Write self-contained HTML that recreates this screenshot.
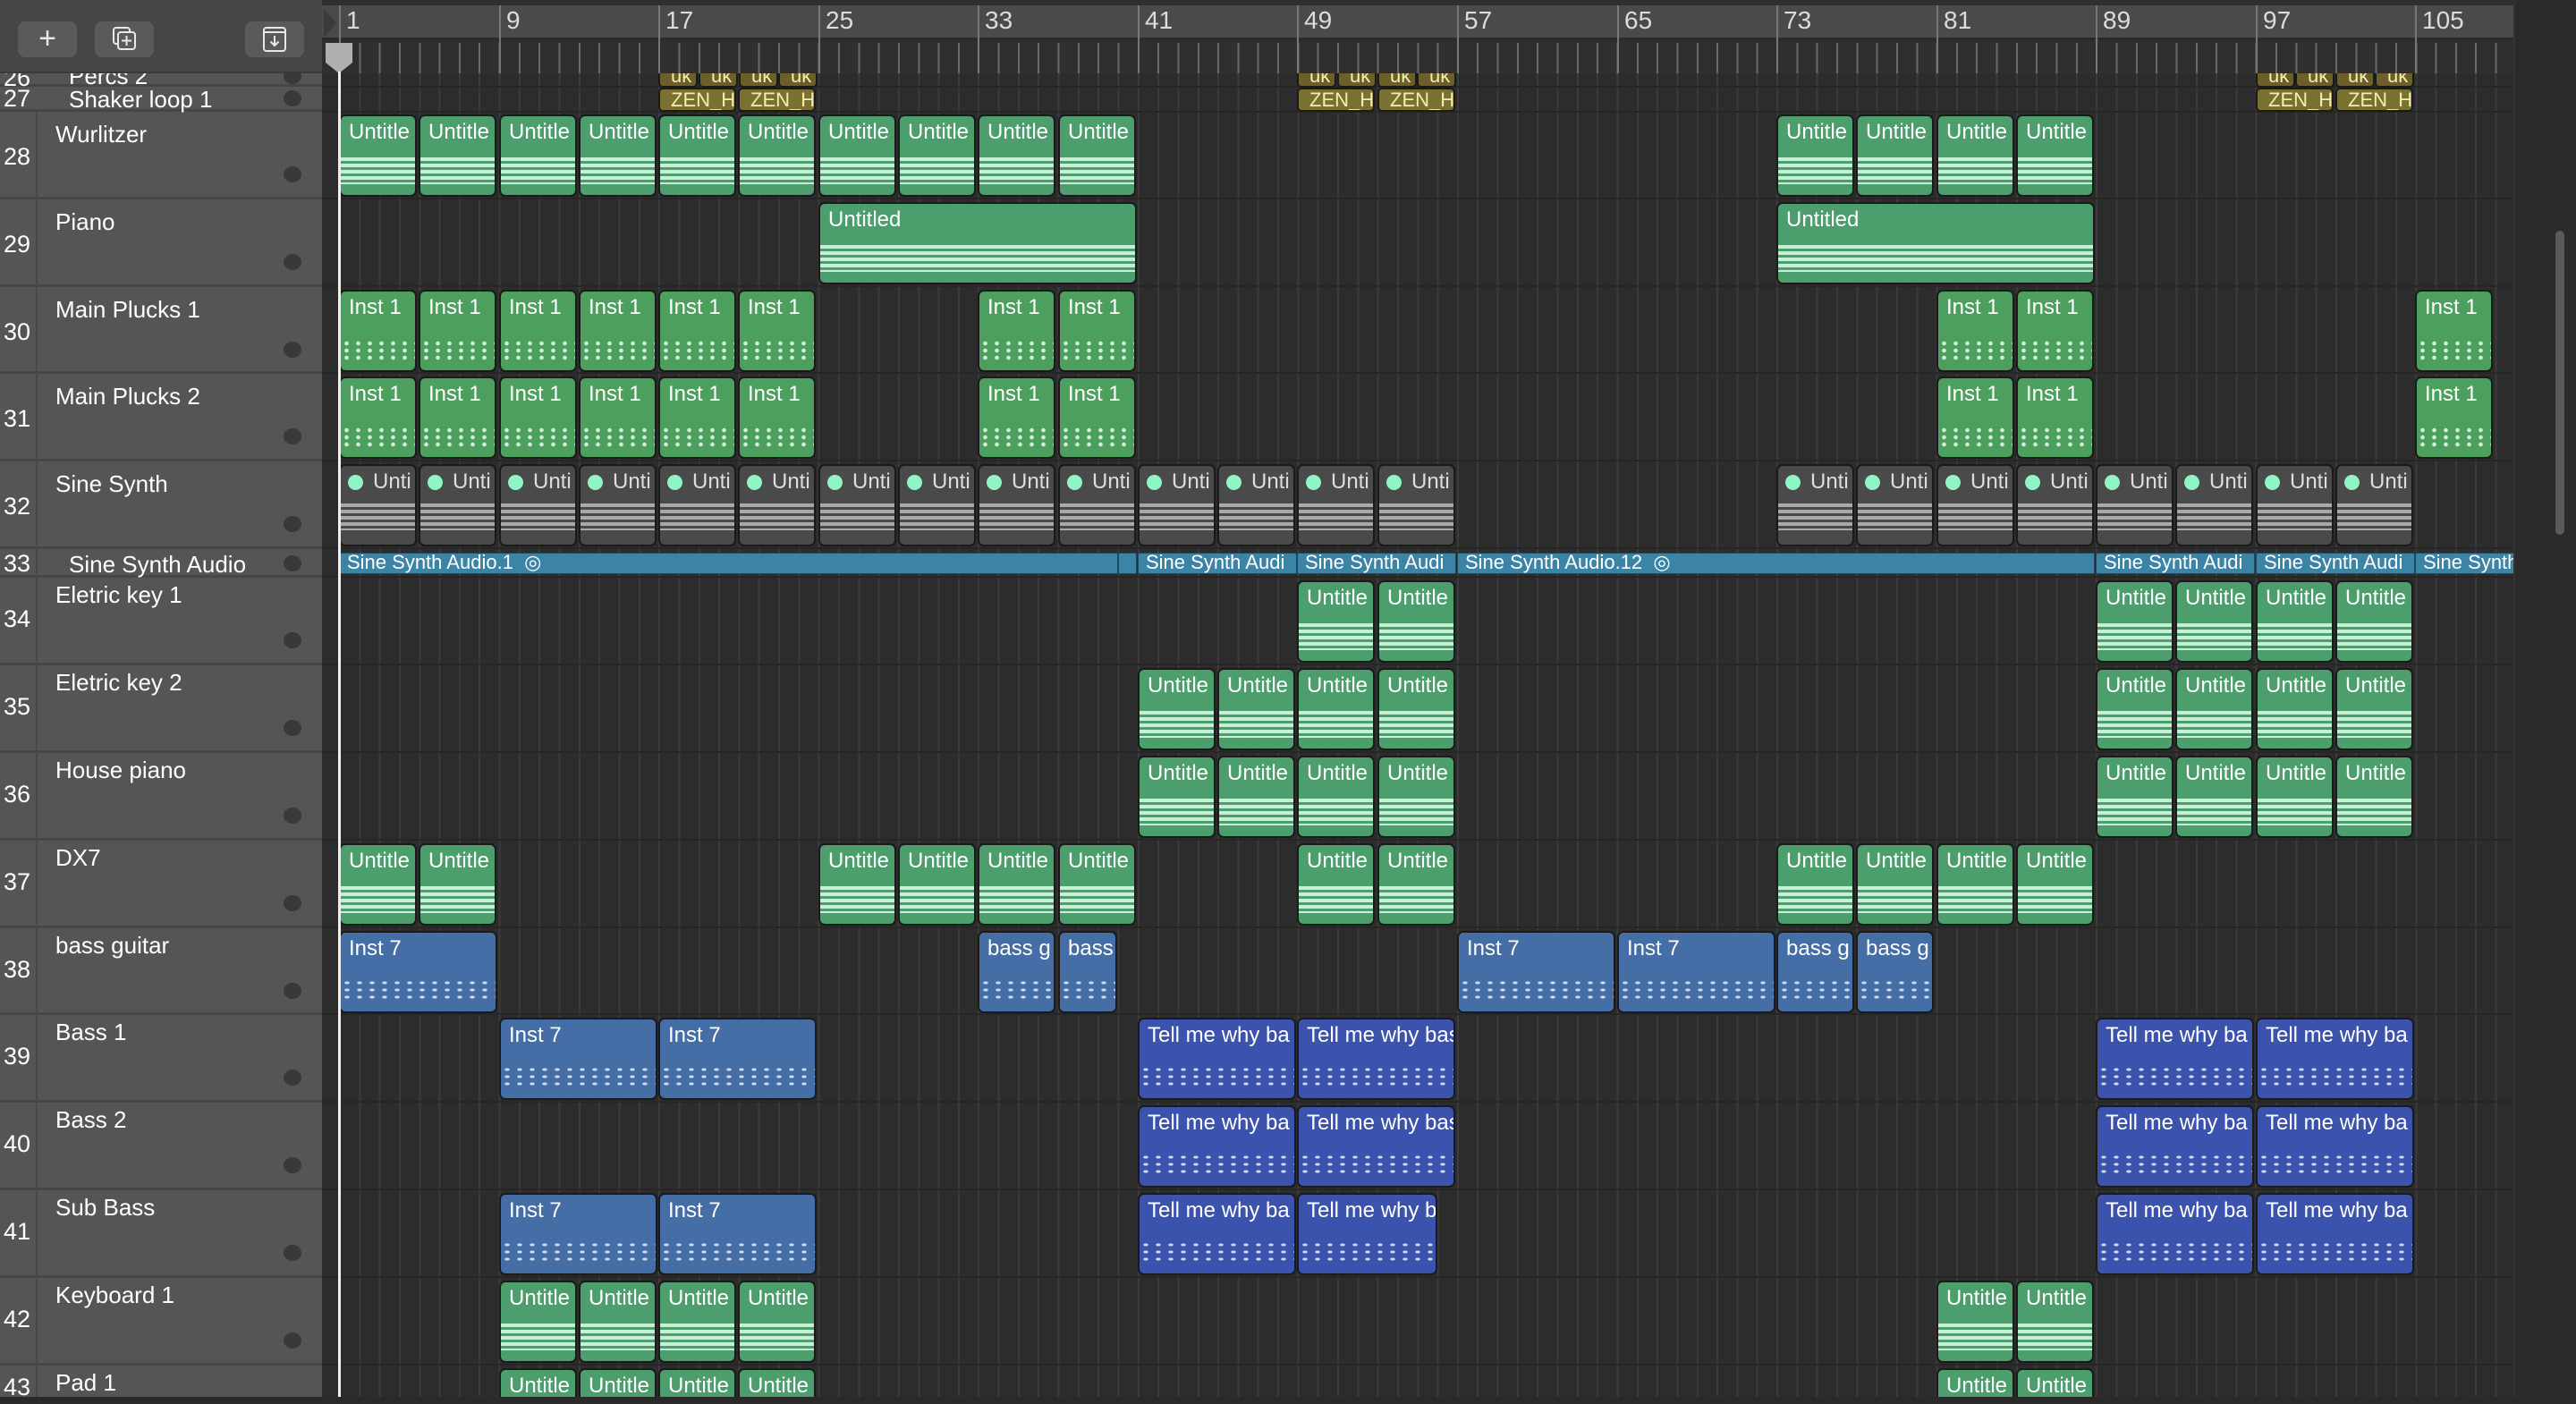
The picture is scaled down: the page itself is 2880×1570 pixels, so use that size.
<!DOCTYPE html>
<html><head><meta charset="utf-8"><style>
*{margin:0;padding:0;box-sizing:border-box}
html,body{width:2880px;height:1570px;overflow:hidden}
body{background:#2c2c2c;font-family:"Liberation Sans",sans-serif}
#wrap{position:relative;width:2880px;height:1570px;overflow:hidden}
#tl{position:absolute;left:360px;top:0;width:2450px;height:1570px;background:#2c2c2c}
#grid{position:absolute;left:379px;top:45px;width:2431px;height:1525px;background:repeating-linear-gradient(90deg,#3b3b3b 0 2px,transparent 2px 22.32px)}
#list{position:absolute;left:0;top:0;width:360px;height:1570px;background:#555}
.tr{position:absolute;left:0;width:360px;border-bottom:3px solid #464646;color:#fff;font-size:26px}
.tr .n{position:absolute;left:4px;font-size:27px}
.tr .t{position:absolute;left:62px}
.tr .dot{position:absolute;left:317px;width:20px;height:18px;border-radius:50%;background:#393939}
#numcol{position:absolute;left:40px;top:125px;width:2px;height:1445px;background:#484848}
.hl{position:absolute;left:360px;width:2450px;height:2px;background:#262626}
#hdr{position:absolute;left:0;top:0;width:360px;height:82px;background:#454545;border-bottom:2px solid #3a3a3a;z-index:5}
.btn{position:absolute;top:24px;height:40px;width:66px;background:#5a5a5a;border-radius:8px;color:#e8e8e8;text-align:center;font-size:34px;line-height:38px}
#ruler{position:absolute;left:360px;top:0;width:2450px;height:82px;z-index:5;background:#2f2f2f}
#rtop{position:absolute;left:0;top:6px;width:2452px;height:39px;background:#4a4a4a;border-bottom:3px solid #2a2a2a}
#ticks{position:absolute;left:19px;top:48px;width:2431px;height:34px;background:repeating-linear-gradient(90deg,#6a6a6a 0 2px,transparent 2px 22.32px)}
.bn{position:absolute;top:6px;color:#dcdcdc;font-size:28px;padding-left:6px;border-left:2px solid #777;height:76px;line-height:34px}
#right{position:absolute;left:2810px;top:0;width:70px;height:1570px;background:#2a2a2a;border-left:2px solid #333;z-index:6}
#thumb{position:absolute;left:2857px;top:258px;width:10px;height:340px;border-radius:5px;background:#5a5a5a;z-index:7}
.row{position:absolute;left:0;width:2810px}
.r{position:absolute;top:3px;height:92px;width:87px;border:2px solid #1a1a1a;border-radius:7px;color:#fff;font-size:24px;padding:4px 0 0 9px;overflow:hidden;white-space:nowrap}
.r i{position:absolute;left:0;right:0}
.g{background:#4c9f6c}
.g i{top:46px;height:30px;background:repeating-linear-gradient(180deg,#c7eed7 0 4px,transparent 4px 7px)}
.gi{background:#4c9f5c}
.gi i{top:54px;height:24px;background:radial-gradient(circle,#d2f0dc 2px,transparent 2.6px) 0 0/13px 8px}
.s{background:#4a4a4a;color:#ddd;padding-left:36px}
.s b{position:absolute;left:8px;top:10px;width:17px;height:17px;border-radius:50%;background:#8ff5c4}
.s i{top:42px;height:30px;background:repeating-linear-gradient(180deg,#a9a9a9 0 4px,transparent 4px 7px)}
.bg{background:#456ea6}
.db{background:#3c53ad}
.bg i,.db i{top:52px;height:24px;background:radial-gradient(ellipse,#dde6fa 2.5px,transparent 3px) 0 0/14px 8px;opacity:.9}
.o{background:#7a7131;color:#f3edb0;height:27px;font-size:22px;padding:0 0 0 12px;line-height:24px;border-radius:5px}
.a{background:#3c84a6;height:24px;font-size:22px;line-height:20px;padding:0 0 0 8px;border-radius:2px;border:1px solid #1e4a5f}
</style></head><body><div id="wrap">
<div id="tl"></div><div id="grid"></div>

<div class="hl" style="top:96px"></div><div class="hl" style="top:124px"></div>
<div class="hl" style="top:221px"></div><div class="hl" style="top:319px"></div><div class="hl" style="top:416px"></div><div class="hl" style="top:514px"></div><div class="hl" style="top:612px"></div><div class="hl" style="top:644px"></div><div class="hl" style="top:742px"></div><div class="hl" style="top:840px"></div><div class="hl" style="top:938px"></div><div class="hl" style="top:1036px"></div><div class="hl" style="top:1133px"></div><div class="hl" style="top:1231px"></div><div class="hl" style="top:1329px"></div><div class="hl" style="top:1427px"></div><div class="hl" style="top:1525px"></div>

<div id="list">
<div class="tr" style="top:60px;height:37px"><span class="n" style="top:12px">26</span><span class="t" style="left:77px;top:10px">Percs 2</span><span class="dot" style="top:16px"></span></div>
<div class="tr" style="top:97px;height:28px"><span class="n" style="top:-2px">27</span><span class="t" style="left:77px;top:-1px">Shaker loop 1</span><span class="dot" style="top:4px"></span></div>
<div class="tr" style="top:125px;height:98px"><span class="n" style="top:35px">28</span><span class="t" style="top:10px">Wurlitzer</span><span class="dot" style="top:61px"></span></div>
<div class="tr" style="top:223px;height:98px"><span class="n" style="top:35px">29</span><span class="t" style="top:10px">Piano</span><span class="dot" style="top:61px"></span></div>
<div class="tr" style="top:321px;height:97px"><span class="n" style="top:35px">30</span><span class="t" style="top:10px">Main Plucks 1</span><span class="dot" style="top:61px"></span></div>
<div class="tr" style="top:418px;height:98px"><span class="n" style="top:35px">31</span><span class="t" style="top:10px">Main Plucks 2</span><span class="dot" style="top:61px"></span></div>
<div class="tr" style="top:516px;height:98px"><span class="n" style="top:35px">32</span><span class="t" style="top:10px">Sine Synth</span><span class="dot" style="top:61px"></span></div>
<div class="tr" style="top:614px;height:32px"><span class="n" style="top:1px">33</span><span class="t" style="left:77px;top:2px">Sine Synth Audio</span><span class="dot" style="top:7px"></span></div>
<div class="tr" style="top:646px;height:98px"><span class="n" style="top:31px">34</span><span class="t" style="top:4px">Eletric key 1</span><span class="dot" style="top:61px"></span></div>
<div class="tr" style="top:744px;height:98px"><span class="n" style="top:31px">35</span><span class="t" style="top:4px">Eletric key 2</span><span class="dot" style="top:61px"></span></div>
<div class="tr" style="top:842px;height:98px"><span class="n" style="top:31px">36</span><span class="t" style="top:4px">House piano</span><span class="dot" style="top:61px"></span></div>
<div class="tr" style="top:940px;height:98px"><span class="n" style="top:31px">37</span><span class="t" style="top:4px">DX7</span><span class="dot" style="top:61px"></span></div>
<div class="tr" style="top:1038px;height:97px"><span class="n" style="top:31px">38</span><span class="t" style="top:4px">bass guitar</span><span class="dot" style="top:61px"></span></div>
<div class="tr" style="top:1135px;height:98px"><span class="n" style="top:31px">39</span><span class="t" style="top:4px">Bass 1</span><span class="dot" style="top:61px"></span></div>
<div class="tr" style="top:1233px;height:98px"><span class="n" style="top:31px">40</span><span class="t" style="top:4px">Bass 2</span><span class="dot" style="top:61px"></span></div>
<div class="tr" style="top:1331px;height:98px"><span class="n" style="top:31px">41</span><span class="t" style="top:4px">Sub Bass</span><span class="dot" style="top:61px"></span></div>
<div class="tr" style="top:1429px;height:98px"><span class="n" style="top:31px">42</span><span class="t" style="top:4px">Keyboard 1</span><span class="dot" style="top:61px"></span></div>
<div class="tr" style="top:1527px;height:43px;border-bottom:none"><span class="n" style="top:9px">43</span><span class="t" style="top:4px">Pad 1</span></div>
<div id="numcol"></div>
</div>

<div id="hdr">
<div class="btn" style="left:20px">+</div>
<div class="btn" style="left:106px"><svg width="34" height="34" viewBox="0 0 34 34" style="margin-top:3px"><rect x="5" y="4" width="18" height="18" rx="3" fill="none" stroke="#e8e8e8" stroke-width="2"/><rect x="10" y="9" width="19" height="19" rx="3" fill="#5a5a5a" stroke="#e8e8e8" stroke-width="2"/><path d="M19.5 13v11M14 18.5h11" stroke="#e8e8e8" stroke-width="2"/></svg></div>
<div class="btn" style="left:274px"><svg width="34" height="34" viewBox="0 0 34 34" style="margin-top:3px"><rect x="5" y="4" width="24" height="26" rx="3" fill="none" stroke="#e8e8e8" stroke-width="2"/><path d="M5 9h24M17 13v11M12.5 19.5l4.5 4.5 4.5-4.5" fill="none" stroke="#e8e8e8" stroke-width="2"/></svg></div>
</div>

<div id="ruler">
<div id="rtop"></div><div id="ticks"></div>
<svg style="position:absolute;left:0;top:8px" width="18" height="36"><path d="M2 2L16 18L2 34Z" fill="#3a3a3a"/></svg>
<div class="bn" style="left:19px">1</div><div class="bn" style="left:198px">9</div><div class="bn" style="left:376px">17</div><div class="bn" style="left:555px">25</div><div class="bn" style="left:733px">33</div><div class="bn" style="left:912px">41</div><div class="bn" style="left:1090px">49</div><div class="bn" style="left:1269px">57</div><div class="bn" style="left:1448px">65</div><div class="bn" style="left:1626px">73</div><div class="bn" style="left:1805px">81</div><div class="bn" style="left:1983px">89</div><div class="bn" style="left:2162px">97</div><div class="bn" style="left:2340px">105</div>
<svg style="position:absolute;left:0;top:46px" width="40" height="36"><path d="M4 2h30v22l-15 12-15-12z" fill="#b0b0b0"/></svg>
</div>
<div style="position:absolute;left:378px;top:80px;width:3px;height:1490px;background:#f0f0f0;z-index:8"></div>
<div id="right"></div><div id="thumb"></div>

<div class="row" style="top:68px">
<div class="r o" style="left:736px;width:44px;background:#6d5f29">uk</div><div class="r o" style="left:781px;width:44px;background:#6d5f29">uk</div><div class="r o" style="left:826px;width:44px;background:#6d5f29">uk</div><div class="r o" style="left:870px;width:44px;background:#6d5f29">uk</div>
<div class="r o" style="left:1450px;width:44px;background:#6d5f29">uk</div><div class="r o" style="left:1495px;width:44px;background:#6d5f29">uk</div><div class="r o" style="left:1540px;width:44px;background:#6d5f29">uk</div><div class="r o" style="left:1584px;width:44px;background:#6d5f29">uk</div>
<div class="r o" style="left:2522px;width:44px;background:#6d5f29">uk</div><div class="r o" style="left:2566px;width:44px;background:#6d5f29">uk</div><div class="r o" style="left:2611px;width:44px;background:#6d5f29">uk</div><div class="r o" style="left:2655px;width:44px;background:#6d5f29">uk</div>
</div>
<div class="row" style="top:95px">
<div class="r o" style="left:736px">ZEN_H</div><div class="r o" style="left:825px">ZEN_H</div>
<div class="r o" style="left:1450px">ZEN_H</div><div class="r o" style="left:1540px">ZEN_H</div>
<div class="r o" style="left:2522px">ZEN_H</div><div class="r o" style="left:2611px">ZEN_H</div>
</div>
<div class="row" style="top:125px">
<div class="r g" style="left:379px">Untitle<i></i></div><div class="r g" style="left:468px">Untitle<i></i></div><div class="r g" style="left:558px">Untitle<i></i></div><div class="r g" style="left:647px">Untitle<i></i></div><div class="r g" style="left:736px">Untitle<i></i></div><div class="r g" style="left:825px">Untitle<i></i></div><div class="r g" style="left:915px">Untitle<i></i></div><div class="r g" style="left:1004px">Untitle<i></i></div><div class="r g" style="left:1093px">Untitle<i></i></div><div class="r g" style="left:1183px">Untitle<i></i></div>
<div class="r g" style="left:1986px">Untitle<i></i></div><div class="r g" style="left:2075px">Untitle<i></i></div><div class="r g" style="left:2165px">Untitle<i></i></div><div class="r g" style="left:2254px">Untitle<i></i></div>
</div>
<div class="row" style="top:223px">
<div class="r g" style="left:915px;width:356px">Untitled<i></i></div>
<div class="r g" style="left:1986px;width:356px">Untitled<i></i></div>
</div>
<div class="row" style="top:321px">
<div class="r gi" style="left:379px">Inst 1<i></i></div><div class="r gi" style="left:468px">Inst 1<i></i></div><div class="r gi" style="left:558px">Inst 1<i></i></div><div class="r gi" style="left:647px">Inst 1<i></i></div><div class="r gi" style="left:736px">Inst 1<i></i></div><div class="r gi" style="left:825px">Inst 1<i></i></div>
<div class="r gi" style="left:1093px">Inst 1<i></i></div><div class="r gi" style="left:1183px">Inst 1<i></i></div>
<div class="r gi" style="left:2165px">Inst 1<i></i></div><div class="r gi" style="left:2254px">Inst 1<i></i></div>
<div class="r gi" style="left:2700px">Inst 1<i></i></div>
</div>
<div class="row" style="top:418px">
<div class="r gi" style="left:379px">Inst 1<i></i></div><div class="r gi" style="left:468px">Inst 1<i></i></div><div class="r gi" style="left:558px">Inst 1<i></i></div><div class="r gi" style="left:647px">Inst 1<i></i></div><div class="r gi" style="left:736px">Inst 1<i></i></div><div class="r gi" style="left:825px">Inst 1<i></i></div>
<div class="r gi" style="left:1093px">Inst 1<i></i></div><div class="r gi" style="left:1183px">Inst 1<i></i></div>
<div class="r gi" style="left:2165px">Inst 1<i></i></div><div class="r gi" style="left:2254px">Inst 1<i></i></div>
<div class="r gi" style="left:2700px">Inst 1<i></i></div>
</div>
<div class="row" style="top:516px">
<div class="r s" style="left:379px"><b></b>Unti<i></i></div><div class="r s" style="left:468px"><b></b>Unti<i></i></div><div class="r s" style="left:558px"><b></b>Unti<i></i></div><div class="r s" style="left:647px"><b></b>Unti<i></i></div><div class="r s" style="left:736px"><b></b>Unti<i></i></div><div class="r s" style="left:825px"><b></b>Unti<i></i></div><div class="r s" style="left:915px"><b></b>Unti<i></i></div><div class="r s" style="left:1004px"><b></b>Unti<i></i></div><div class="r s" style="left:1093px"><b></b>Unti<i></i></div><div class="r s" style="left:1183px"><b></b>Unti<i></i></div><div class="r s" style="left:1272px"><b></b>Unti<i></i></div><div class="r s" style="left:1361px"><b></b>Unti<i></i></div><div class="r s" style="left:1450px"><b></b>Unti<i></i></div><div class="r s" style="left:1540px"><b></b>Unti<i></i></div>
<div class="r s" style="left:1986px"><b></b>Unti<i></i></div><div class="r s" style="left:2075px"><b></b>Unti<i></i></div><div class="r s" style="left:2165px"><b></b>Unti<i></i></div><div class="r s" style="left:2254px"><b></b>Unti<i></i></div><div class="r s" style="left:2343px"><b></b>Unti<i></i></div><div class="r s" style="left:2432px"><b></b>Unti<i></i></div><div class="r s" style="left:2522px"><b></b>Unti<i></i></div><div class="r s" style="left:2611px"><b></b>Unti<i></i></div>
</div>
<div class="row" style="top:615px">
<div class="r a" style="left:379px;width:871px">Sine Synth Audio.1&nbsp; ◎</div><div class="r a" style="left:1250px;width:21px"></div>
<div class="r a" style="left:1272px;width:178px">Sine Synth Audi</div><div class="r a" style="left:1450px;width:178px">Sine Synth Audi</div>
<div class="r a" style="left:1629px;width:713px">Sine Synth Audio.12&nbsp; ◎</div>
<div class="r a" style="left:2343px;width:178px">Sine Synth Audi</div><div class="r a" style="left:2522px;width:178px">Sine Synth Audi</div><div class="r a" style="left:2700px;width:130px">Sine Synth</div>
</div>
<div class="row" style="top:646px">
<div class="r g" style="left:1450px">Untitle<i></i></div><div class="r g" style="left:1540px">Untitle<i></i></div>
<div class="r g" style="left:2343px">Untitle<i></i></div><div class="r g" style="left:2432px">Untitle<i></i></div><div class="r g" style="left:2522px">Untitle<i></i></div><div class="r g" style="left:2611px">Untitle<i></i></div>
</div>
<div class="row" style="top:744px">
<div class="r g" style="left:1272px">Untitle<i></i></div><div class="r g" style="left:1361px">Untitle<i></i></div><div class="r g" style="left:1450px">Untitle<i></i></div><div class="r g" style="left:1540px">Untitle<i></i></div>
<div class="r g" style="left:2343px">Untitle<i></i></div><div class="r g" style="left:2432px">Untitle<i></i></div><div class="r g" style="left:2522px">Untitle<i></i></div><div class="r g" style="left:2611px">Untitle<i></i></div>
</div>
<div class="row" style="top:842px">
<div class="r g" style="left:1272px">Untitle<i></i></div><div class="r g" style="left:1361px">Untitle<i></i></div><div class="r g" style="left:1450px">Untitle<i></i></div><div class="r g" style="left:1540px">Untitle<i></i></div>
<div class="r g" style="left:2343px">Untitle<i></i></div><div class="r g" style="left:2432px">Untitle<i></i></div><div class="r g" style="left:2522px">Untitle<i></i></div><div class="r g" style="left:2611px">Untitle<i></i></div>
</div>
<div class="row" style="top:940px">
<div class="r g" style="left:379px">Untitle<i></i></div><div class="r g" style="left:468px">Untitle<i></i></div>
<div class="r g" style="left:915px">Untitle<i></i></div><div class="r g" style="left:1004px">Untitle<i></i></div><div class="r g" style="left:1093px">Untitle<i></i></div><div class="r g" style="left:1183px">Untitle<i></i></div>
<div class="r g" style="left:1450px">Untitle<i></i></div><div class="r g" style="left:1540px">Untitle<i></i></div>
<div class="r g" style="left:1986px">Untitle<i></i></div><div class="r g" style="left:2075px">Untitle<i></i></div><div class="r g" style="left:2165px">Untitle<i></i></div><div class="r g" style="left:2254px">Untitle<i></i></div>
</div>
<div class="row" style="top:1038px">
<div class="r bg" style="left:379px;width:177px">Inst 7<i></i></div>
<div class="r bg" style="left:1093px">bass g<i></i></div><div class="r bg" style="left:1183px;width:66px">bass<i></i></div>
<div class="r bg" style="left:1629px;width:177px">Inst 7<i></i></div><div class="r bg" style="left:1808px;width:177px">Inst 7<i></i></div>
<div class="r bg" style="left:1986px">bass g<i></i></div><div class="r bg" style="left:2075px">bass g<i></i></div>
</div>
<div class="row" style="top:1135px">
<div class="r bg" style="left:558px;width:177px">Inst 7<i></i></div><div class="r bg" style="left:736px;width:177px">Inst 7<i></i></div>
<div class="r db" style="left:1272px;width:177px">Tell me why ba<i></i></div><div class="r db" style="left:1450px;width:177px">Tell me why bas<i></i></div>
<div class="r db" style="left:2343px;width:177px">Tell me why ba<i></i></div><div class="r db" style="left:2522px;width:177px">Tell me why ba<i></i></div>
</div>
<div class="row" style="top:1233px">
<div class="r db" style="left:1272px;width:177px">Tell me why ba<i></i></div><div class="r db" style="left:1450px;width:177px">Tell me why bas<i></i></div>
<div class="r db" style="left:2343px;width:177px">Tell me why ba<i></i></div><div class="r db" style="left:2522px;width:177px">Tell me why ba<i></i></div>
</div>
<div class="row" style="top:1331px">
<div class="r bg" style="left:558px;width:177px">Inst 7<i></i></div><div class="r bg" style="left:736px;width:177px">Inst 7<i></i></div>
<div class="r db" style="left:1272px;width:177px">Tell me why ba<i></i></div><div class="r db" style="left:1450px;width:157px">Tell me why b<i></i></div>
<div class="r db" style="left:2343px;width:177px">Tell me why ba<i></i></div><div class="r db" style="left:2522px;width:177px">Tell me why ba<i></i></div>
</div>
<div class="row" style="top:1429px">
<div class="r g" style="left:558px">Untitle<i></i></div><div class="r g" style="left:647px">Untitle<i></i></div><div class="r g" style="left:736px">Untitle<i></i></div><div class="r g" style="left:825px">Untitle<i></i></div>
<div class="r g" style="left:2165px">Untitle<i></i></div><div class="r g" style="left:2254px">Untitle<i></i></div>
</div>
<div class="row" style="top:1527px">
<div class="r g" style="left:558px">Untitle<i></i></div><div class="r g" style="left:647px">Untitle<i></i></div><div class="r g" style="left:736px">Untitle<i></i></div><div class="r g" style="left:825px">Untitle<i></i></div>
<div class="r g" style="left:2165px">Untitle<i></i></div><div class="r g" style="left:2254px">Untitle<i></i></div>
</div>
<div style="position:absolute;left:0;top:1562px;width:2880px;height:8px;background:#2a2a2a;z-index:9"></div>
</div></body></html>
